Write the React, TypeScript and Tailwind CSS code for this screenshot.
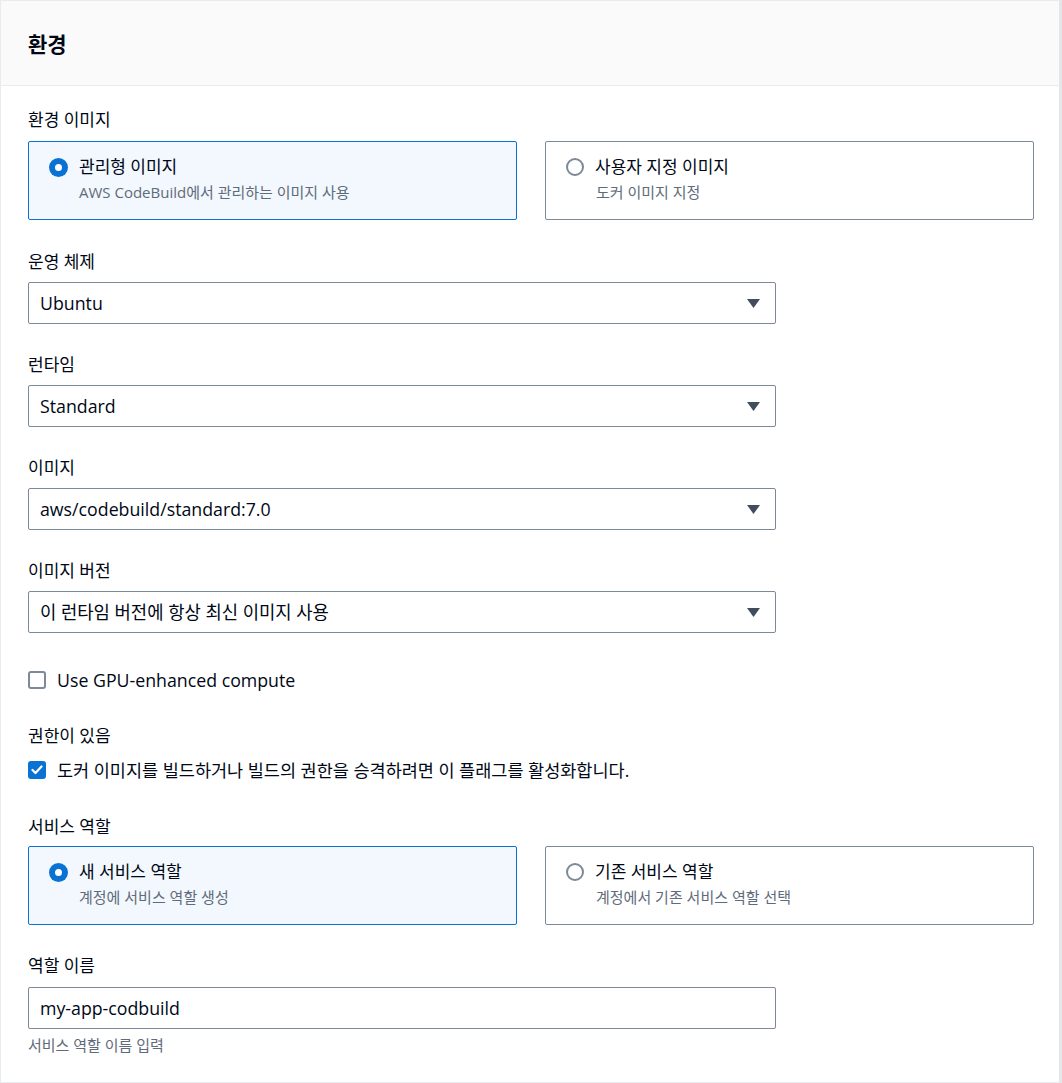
import React from "react";

const font = { fontFamily: '"Open Sans", "Noto Sans CJK KR", sans-serif' };

function Caret() {
  return (
    <svg width="13" height="9" viewBox="0 0 13 9" className="shrink-0">
      <path d="M0 0 L13 0 L6.5 9 Z" fill="#414d5c" />
    </svg>
  );
}

function Radio({ checked }: { checked: boolean }) {
  return checked ? (
    <span className="w-[19px] h-[19px] rounded-full bg-[#0972d3] flex items-center justify-center shrink-0">
      <span className="w-[7px] h-[7px] rounded-full bg-white" />
    </span>
  ) : (
    <span className="w-[18px] h-[18px] rounded-full border-2 border-[#7d8998] bg-white shrink-0" />
  );
}

function Card({ checked, title, desc }: { checked: boolean; title: string; desc: string }) {
  return (
    <div
      className={
        "h-[79px] rounded-[2px] border pl-[20px] pt-[14px] " +
        (checked ? "border-[#0972d3] bg-[#f2f8fd]" : "border-[#7d8998] bg-white")
      }
    >
      <div className="flex items-center gap-[11px] h-[22px]">
        <Radio checked={checked} />
        <span className="text-[17px] leading-[22px] text-[#000716]">{title}</span>
      </div>
      <div className="pl-[30px] mt-[4px] text-[15px] leading-[20px] text-[#5f6b7a]">{desc}</div>
    </div>
  );
}

function Label({ children }: { children: React.ReactNode }) {
  return <div className="text-[17px] leading-[22px] text-[#000716]">{children}</div>;
}

function Select({ value }: { value: string }) {
  return (
    <div className="w-[748px] h-[42px] border border-[#7d8998] rounded-[2px] bg-white flex items-center justify-between pl-[11px] pr-[15px]">
      <span className="text-[17.75px] text-[#000716]">{value}</span>
      <Caret />
    </div>
  );
}

export default function App() {
  return (
    <div style={font} className="w-[1062px] h-[1083px] bg-white">
      <div className="w-full h-full border border-[#e9ebed] border-r-[3px] border-r-[#e4e6e8] flex flex-col">
        <div className="h-[85px] bg-[#fafafa] border-b border-[#e9ebed] flex items-center px-[27px] shrink-0">
          <h2 className="text-[21px] font-bold text-[#000716] mt-[3px]">환경</h2>
        </div>
        <div className="px-[27px] pt-[23px]">
          <Label>환경 이미지</Label>
          <div className="grid grid-cols-2 gap-[28px] mt-[10px] w-[1006px]">
            <Card checked title="관리형 이미지" desc="AWS CodeBuild에서 관리하는 이미지 사용" />
            <Card checked={false} title="사용자 지정 이미지" desc="도커 이미지 지정" />
          </div>

          <div className="mt-[31px]">
            <Label>운영 체제</Label>
            <div className="mt-[9px]"><Select value="Ubuntu" /></div>
          </div>
          <div className="mt-[30px]">
            <Label>런타임</Label>
            <div className="mt-[9px]"><Select value="Standard" /></div>
          </div>
          <div className="mt-[30px]">
            <Label>이미지</Label>
            <div className="mt-[9px]"><Select value="aws/codebuild/standard:7.0" /></div>
          </div>
          <div className="mt-[30px]">
            <Label>이미지 버전</Label>
            <div className="mt-[9px]"><Select value="이 런타임 버전에 항상 최신 이미지 사용" /></div>
          </div>

          <div className="mt-[36px] flex items-center gap-[11px] h-[22px]">
            <span className="w-[18px] h-[18px] rounded-[3px] border-2 border-[#7d8998] bg-white shrink-0" />
            <span className="text-[17.75px] leading-[22px] text-[#000716]">Use GPU-enhanced compute</span>
          </div>

          <div className="mt-[34px]">
            <Label>권한이 있음</Label>
            <div className="mt-[12px] flex items-center gap-[11px] h-[22px]">
              <span className="w-[18px] h-[18px] rounded-[3px] bg-[#0972d3] flex items-center justify-center shrink-0">
                <svg width="12" height="10" viewBox="0 0 12 10">
                  <path d="M1.5 5 L4.5 8 L10.5 1.5" stroke="white" strokeWidth="2.2" fill="none" strokeLinecap="round" strokeLinejoin="round" />
                </svg>
              </span>
              <span className="text-[17.5px] leading-[22px] text-[#000716]">도커 이미지를 빌드하거나 빌드의 권한을 승격하려면 이 플래그를 활성화합니다.</span>
            </div>
          </div>

          <div className="mt-[35px]">
            <Label>서비스 역할</Label>
            <div className="grid grid-cols-2 gap-[28px] mt-[8px] w-[1006px]">
              <Card checked title="새 서비스 역할" desc="계정에 서비스 역할 생성" />
              <Card checked={false} title="기존 서비스 역할" desc="계정에서 기존 서비스 역할 선택" />
            </div>
          </div>

          <div className="mt-[30px]">
            <Label>역할 이름</Label>
            <div className="mt-[10px] w-[748px] h-[42px] border border-[#7d8998] rounded-[2px] bg-white flex items-center pl-[11px]">
              <span className="text-[17.75px] text-[#000716]">my-app-codbuild</span>
            </div>
            <div className="mt-[6px] text-[15px] leading-[20px] text-[#5f6b7a]">서비스 역할 이름 입력</div>
          </div>
        </div>
      </div>
    </div>
  );
}
